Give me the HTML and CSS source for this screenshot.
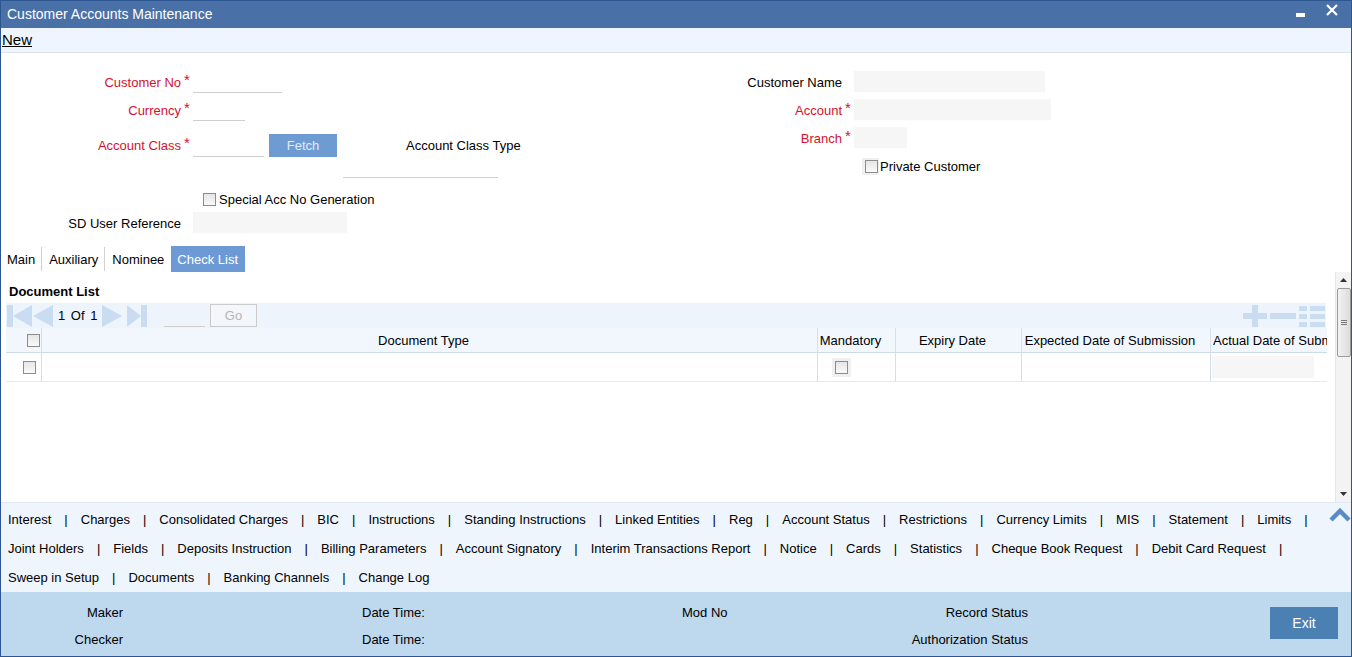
FILE: index.html
```html
<!DOCTYPE html>
<html>
<head>
<meta charset="utf-8">
<title>Customer Accounts Maintenance</title>
<link rel="stylesheet" href="styles.css">
</head>
<body>
<div class="window">
  <div class="titlebar">
    <span class="title">Customer Accounts Maintenance</span>
    <div class="winctrls">
      <span class="min"></span>
      <svg class="close" width="12" height="12" viewBox="0 0 12 12"><path d="M1 1L11 11M11 1L1 11" stroke="#fff" stroke-width="2.2" fill="none"/></svg>
    </div>
  </div>
  <div class="toolbar"><a class="new" href="#">New</a></div>

  <div class="form">
    <div class="col col-left">
      <div class="row h22">
        <span class="lbl req">Customer No</span><span class="star">*</span><span class="inp line w89"></span>
      </div>
      <div class="row h22 mt6">
        <span class="lbl req">Currency</span><span class="star">*</span><span class="inp line w52"></span>
      </div>
      <div class="row h23 mt13">
        <span class="lbl req">Account Class</span><span class="star">*</span><span class="inp line w71"></span>
        <button class="fetch">Fetch</button>
        <span class="plain act-type">Account Class Type</span>
      </div>
      <div class="row h21">
        <span class="inp line w155 act-type-inp"></span>
      </div>
      <div class="row h16 mt13">
        <span class="cb cb-special"></span><span class="cbtext">Special Acc No Generation</span>
      </div>
      <div class="row h22 mt5">
        <span class="lbl">SD User Reference</span><span class="star"></span><span class="inp ro w154"></span>
      </div>
    </div>
    <div class="col col-right">
      <div class="row h22">
        <span class="lbl lbl-r">Customer Name</span><span class="star"></span><span class="inp ro w191"></span>
      </div>
      <div class="row h22 mt6">
        <span class="lbl lbl-r req">Account</span><span class="star">*</span><span class="inp ro w197"></span>
      </div>
      <div class="row h22 mt6">
        <span class="lbl lbl-r req">Branch</span><span class="star">*</span><span class="inp ro w53"></span>
      </div>
      <div class="row h16 mt9">
        <span class="cbwrap cb-private"><span class="cb"></span></span><span class="cbtext cbtext-tight">Private Customer</span>
      </div>
    </div>
  </div>

  <div class="tabs">
    <span class="tab first">Main</span>
    <span class="tab">Auxiliary</span>
    <span class="tab">Nominee</span>
    <span class="tab active">Check List</span>
  </div>

  <div class="panel">
    <div class="panel-body">
      <div class="doc-title">Document List</div>
      <div class="navbar">
        <svg class="nav nav-first" width="25" height="22" viewBox="0 0 25 22"><rect x="0" y="0" width="6" height="22" fill="#c9dcf2"/><polygon points="25,0 6,11 25,22" fill="#c9dcf2"/></svg>
        <svg class="nav nav-prev" width="20" height="22" viewBox="0 0 20 22"><polygon points="20,0 0,11 20,22" fill="#c9dcf2"/></svg>
        <span class="pageinfo">1 Of 1</span>
        <svg class="nav nav-next" width="20" height="22" viewBox="0 0 20 22"><polygon points="0,0 20,11 0,22" fill="#c9dcf2"/></svg>
        <svg class="nav nav-last" width="20" height="22" viewBox="0 0 20 22"><polygon points="0,0 14,11 0,22" fill="#c9dcf2"/><rect x="14" y="0" width="6" height="22" fill="#c9dcf2"/></svg>
        <span class="pageinp"></span>
        <button class="gobtn">Go</button>
        <div class="gridtools">
          <svg width="24" height="22" viewBox="0 0 24 22"><rect x="0" y="8" width="24" height="6" fill="#c9dcf2"/><rect x="9" y="0" width="6" height="22" fill="#c9dcf2"/></svg>
          <svg width="26" height="22" viewBox="0 0 26 22"><rect x="0" y="8" width="26" height="6" fill="#c9dcf2"/></svg>
          <svg width="26" height="22" viewBox="0 0 26 22"><rect x="0" y="1" width="8" height="5" fill="#c9dcf2"/><rect x="11" y="1" width="15" height="5" fill="#c9dcf2"/><rect x="0" y="9" width="8" height="5" fill="#c9dcf2"/><rect x="11" y="9" width="15" height="5" fill="#c9dcf2"/><rect x="0" y="17" width="8" height="5" fill="#c9dcf2"/><rect x="11" y="17" width="15" height="5" fill="#c9dcf2"/></svg>
        </div>
      </div>
      <div class="grid">
        <div class="gh c-cb"><span class="cb"></span></div>
        <div class="gh">Document Type</div>
        <div class="gh">Mandatory</div>
        <div class="gh">Expiry Date</div>
        <div class="gh">Expected Date of Submission</div>
        <div class="gh gh-last"><span class="clip">Actual Date of Subm</span></div>

        <div class="gd c-cb-row"><span class="cb"></span></div>
        <div class="gd"></div>
        <div class="gd gd-mand"><span class="cbwrap"><span class="cb"></span></span></div>
        <div class="gd"></div>
        <div class="gd"></div>
        <div class="gd gd-last"><span class="inp ro actual-inp"></span></div>
      </div>
    </div>
    <div class="scrollbar">
      <div class="sb-btn"><svg width="7" height="4" viewBox="0 0 7 4"><polygon points="0,4 3.5,0 7,4" fill="#333"/></svg></div>
      <div class="sb-thumb"><span class="grip"></span><span class="grip"></span><span class="grip"></span></div>
      <div class="sb-track"></div>
      <div class="sb-btn"><svg width="7" height="4" viewBox="0 0 7 4"><polygon points="0,0 3.5,4 7,0" fill="#333"/></svg></div>
    </div>
  </div>

  <div class="links">
    <div class="linkrows">
      <div class="linkrow">
        <span>Interest</span><span class="sep">|</span><span>Charges</span><span class="sep">|</span><span>Consolidated Charges</span><span class="sep">|</span><span>BIC</span><span class="sep">|</span><span>Instructions</span><span class="sep">|</span><span>Standing Instructions</span><span class="sep">|</span><span>Linked Entities</span><span class="sep">|</span><span>Reg</span><span class="sep">|</span><span>Account Status</span><span class="sep">|</span><span>Restrictions</span><span class="sep">|</span><span>Currency Limits</span><span class="sep">|</span><span>MIS</span><span class="sep">|</span><span>Statement</span><span class="sep">|</span><span>Limits</span><span class="sep">|</span>
      </div>
      <div class="linkrow">
        <span>Joint Holders</span><span class="sep">|</span><span>Fields</span><span class="sep">|</span><span>Deposits Instruction</span><span class="sep">|</span><span>Billing Parameters</span><span class="sep">|</span><span>Account Signatory</span><span class="sep">|</span><span>Interim Transactions Report</span><span class="sep">|</span><span>Notice</span><span class="sep">|</span><span>Cards</span><span class="sep">|</span><span>Statistics</span><span class="sep">|</span><span>Cheque Book Request</span><span class="sep">|</span><span>Debit Card Request</span><span class="sep">|</span>
      </div>
      <div class="linkrow">
        <span>Sweep in Setup</span><span class="sep">|</span><span>Documents</span><span class="sep">|</span><span>Banking Channels</span><span class="sep">|</span><span>Change Log</span>
      </div>
    </div>
    <svg class="chevron" width="22" height="15" viewBox="0 0 22 15"><path d="M2 13L11 4L20 13" stroke="#5b8bc6" stroke-width="4.5" fill="none" stroke-linejoin="miter"/></svg>
  </div>

  <div class="footer">
    <div class="audit">
      <span class="a-maker">Maker</span><span></span><span>Date Time:</span><span>Mod No</span><span class="a-right">Record Status</span>
      <span class="a-maker">Checker</span><span></span><span>Date Time:</span><span></span><span class="a-right">Authorization Status</span>
    </div>
    <button class="exit">Exit</button>
  </div>
</div>
</body>
</html>
```
FILE: styles.css
```css
* { box-sizing: border-box; }
html, body { margin: 0; padding: 0; }
body {
  font-family: "Liberation Sans", Arial, sans-serif;
  font-size: 13px;
  color: #000;
  background: #fff;
}
.window {
  width: 1352px;
  height: 657px;
  border: 1px solid #2c5591;
  display: flex;
  flex-direction: column;
  overflow: hidden;
}
.titlebar {
  height: 27px;
  background: #4a71a7;
  display: flex;
  align-items: center;
  padding-left: 6px;
  padding-bottom: 1px;
  flex-shrink: 0;
}
.title { color: #fff; font-size: 14px; }
.winctrls { margin-left: auto; display: flex; align-items: center; padding-right: 13px; padding-bottom: 10px; }
.min { width: 9px; height: 4px; background: #fff; margin-top: 11px; margin-right: 21px; }
.close { display: block; margin-top: 1px; }
.toolbar {
  height: 25px;
  background: #eef5fe;
  border-bottom: 1px solid #dfe4ea;
  display: flex;
  align-items: center;
  padding-left: 1px;
  flex-shrink: 0;
}
.new { color: #000; font-size: 15px; text-decoration: underline; margin-top: -1px; }

.form { height: 193px; display: flex; flex-shrink: 0; }
.col { padding-top: 18px; }
.col-left { width: 690px; }
.col-right { width: 660px; }
.row { display: flex; align-items: center; }
.h16 { height: 16px; } .h21 { height: 21px; } .h22 { height: 22px; } .h23 { height: 23px; }
.mt5 { margin-top: 5px; } .mt6 { margin-top: 6px; } .mt9 { margin-top: 9px; } .mt13 { margin-top: 13px; }
.lbl { width: 180px; text-align: right; }
.lbl-r { width: 151px; }
.req { color: #d3122c; }
.star { width: 12px; color: #d3122c; padding-left: 3px; align-self: flex-start; font-size: 15px; line-height: 15px; padding-top: 1px; }
.inp { display: block; height: 100%; }
.line { border-bottom: 1px solid #cfcfcf; }
.ro { background: #f6f6f6; border-bottom: 1px solid #fdfdfd; }
.w52 { width: 52px; } .w53 { width: 53px; } .w71 { width: 71px; } .w89 { width: 89px; }
.w154 { width: 154px; } .w155 { width: 155px; } .w191 { width: 191px; } .w197 { width: 197px; }
.fetch {
  margin-left: 5px;
  width: 68px;
  height: 23px;
  border: none;
  background: #6f9bd3;
  color: #e3eaf4;
  font-family: "Liberation Sans", Arial, sans-serif;
  font-size: 13px;
  padding: 0;
}
.act-type { margin-left: 69px; }
.act-type-inp { margin-left: 342px; }
.cb {
  display: inline-block;
  width: 13px;
  height: 13px;
  border: 1px solid #8c8c8c;
  background: linear-gradient(#e6e6e6, #f9f9f9);
  flex-shrink: 0;
}
.cb-special { margin-left: 202px; }
.cbtext { margin-left: 3px; }
.cbtext-tight { margin-left: 1px; }
.cbwrap { display: inline-flex; align-items: center; justify-content: center; background: #f0f0f0; padding: 3px; }
.cb-private { margin-left: 171px; padding: 2px 1px 2px 3px; }

.tabs { height: 26px; display: flex; align-items: stretch; flex-shrink: 0; }
.tab { display: flex; align-items: center; padding: 0 6px 0 7px; border-left: 1px solid #d0d0d0; margin: 1px 0; }
.tab.first { border-left: none; padding-left: 6px; }
.tab.active { background: #6d9ad5; color: #fff; border-left: 1px solid #fff; margin: 0; padding: 0 7px 0 6px; }

.panel { height: 230px; display: flex; flex-shrink: 0; }
.panel-body { flex: 1; }
.doc-title { font-weight: bold; padding-top: 11px; padding-left: 8px; line-height: 17px; height: 28px; }
.navbar {
  margin-top: 3px;
  margin-left: 5px;
  width: 1320px;
  height: 25px;
  background: #edf4fc;
  display: flex;
  align-items: center;
}
.nav { display: block; }
.nav-first { margin-left: 1px; }
.nav-prev { margin-left: 1px; }
.pageinfo { margin-left: 5px; width: 44px; word-spacing: 2px; }
.nav-last { margin-left: 5px; }
.pageinp { margin-left: 17px; width: 41px; height: 22px; border-bottom: 1px solid #cfcfcf; }
.gobtn {
  margin-left: 5px;
  width: 47px;
  height: 23px;
  border: 1px solid #cbcbcb;
  background: #f3f7fc;
  color: #b5b5b5;
  font-family: "Liberation Sans", Arial, sans-serif;
  font-size: 13px;
  padding: 0;
}
.gridtools { margin-left: auto; display: flex; align-items: center; gap: 3px; padding-right: 1px; }
.gridtools svg { display: block; }

.grid {
  margin-left: 5px;
  width: 1321px;
  display: grid;
  grid-template-columns: 35px 776px 78px 126px 189px 117px;
}
.gh {
  height: 25px;
  background: #f1f7fd;
  border-bottom: 1px solid #cbd9e8;
  border-left: 1px solid #d5e1ee;
  display: flex;
  align-items: center;
  justify-content: center;
  padding-right: 12px;
  white-space: nowrap;
}
.gh.c-cb { border-left: none; justify-content: flex-start; padding-left: 21px; padding-right: 0; }
.gh-last { justify-content: flex-start; padding-left: 2px; padding-right: 0; }
.clip { display: block; width: 114px; overflow: hidden; white-space: nowrap; }
.gd {
  height: 29px;
  border-bottom: 1px solid #f3e6de;
  border-left: 1px solid #d5dde6;
  display: flex;
  align-items: center;
}
.gd.c-cb-row { border-left: none; padding-left: 17px; }
.gd-mand { padding-left: 14px; }
.gd-last { padding-left: 1px; }
.actual-inp { width: 102px; height: 23px; }

.scrollbar {
  width: 16px;
  background: #f3f3f3;
  border-left: 1px solid #e6e6e6;
  display: flex;
  flex-direction: column;
  align-items: center;
}
.sb-btn { height: 16px; width: 100%; display: flex; align-items: center; justify-content: center; }
.sb-thumb {
  width: 14px;
  height: 69px;
  border: 1px solid #9b9b9b;
  border-radius: 2px;
  background: linear-gradient(90deg, #f2f2f2, #dcdcdc);
  display: flex;
  flex-direction: column;
  align-items: center;
  justify-content: center;
  gap: 1px;
}
.grip { width: 6px; height: 1px; background: #777; }
.sb-track { flex: 1; }

.links {
  height: 90px;
  background: #eef5fd;
  border-top: 1px solid #e2e8ef;
  display: flex;
  flex-shrink: 0;
}
.linkrows { padding-top: 2px; padding-left: 7px; flex: 1; }
.linkrow { height: 29px; display: flex; align-items: center; white-space: nowrap; }
.sep { padding: 0 13px; }
.chevron { display: block; margin-top: 4px; }

.footer {
  flex: 1;
  background: #bed8ed;
  display: flex;
  align-items: center;
}
.audit {
  display: grid;
  grid-template-columns: 122px 239px 320px 168px 178px;
  grid-auto-rows: 27px;
  align-items: center;
  padding-top: 4px;
}
.a-maker { text-align: right; }
.a-right { text-align: right; }
.exit {
  margin-left: auto;
  margin-right: 13px;
  width: 68px;
  height: 32px;
  border: none;
  background: #4a80b2;
  color: #fff;
  font-family: "Liberation Sans", Arial, sans-serif;
  font-size: 14px;
  padding: 0;
  margin-top: -2px;
}
```
